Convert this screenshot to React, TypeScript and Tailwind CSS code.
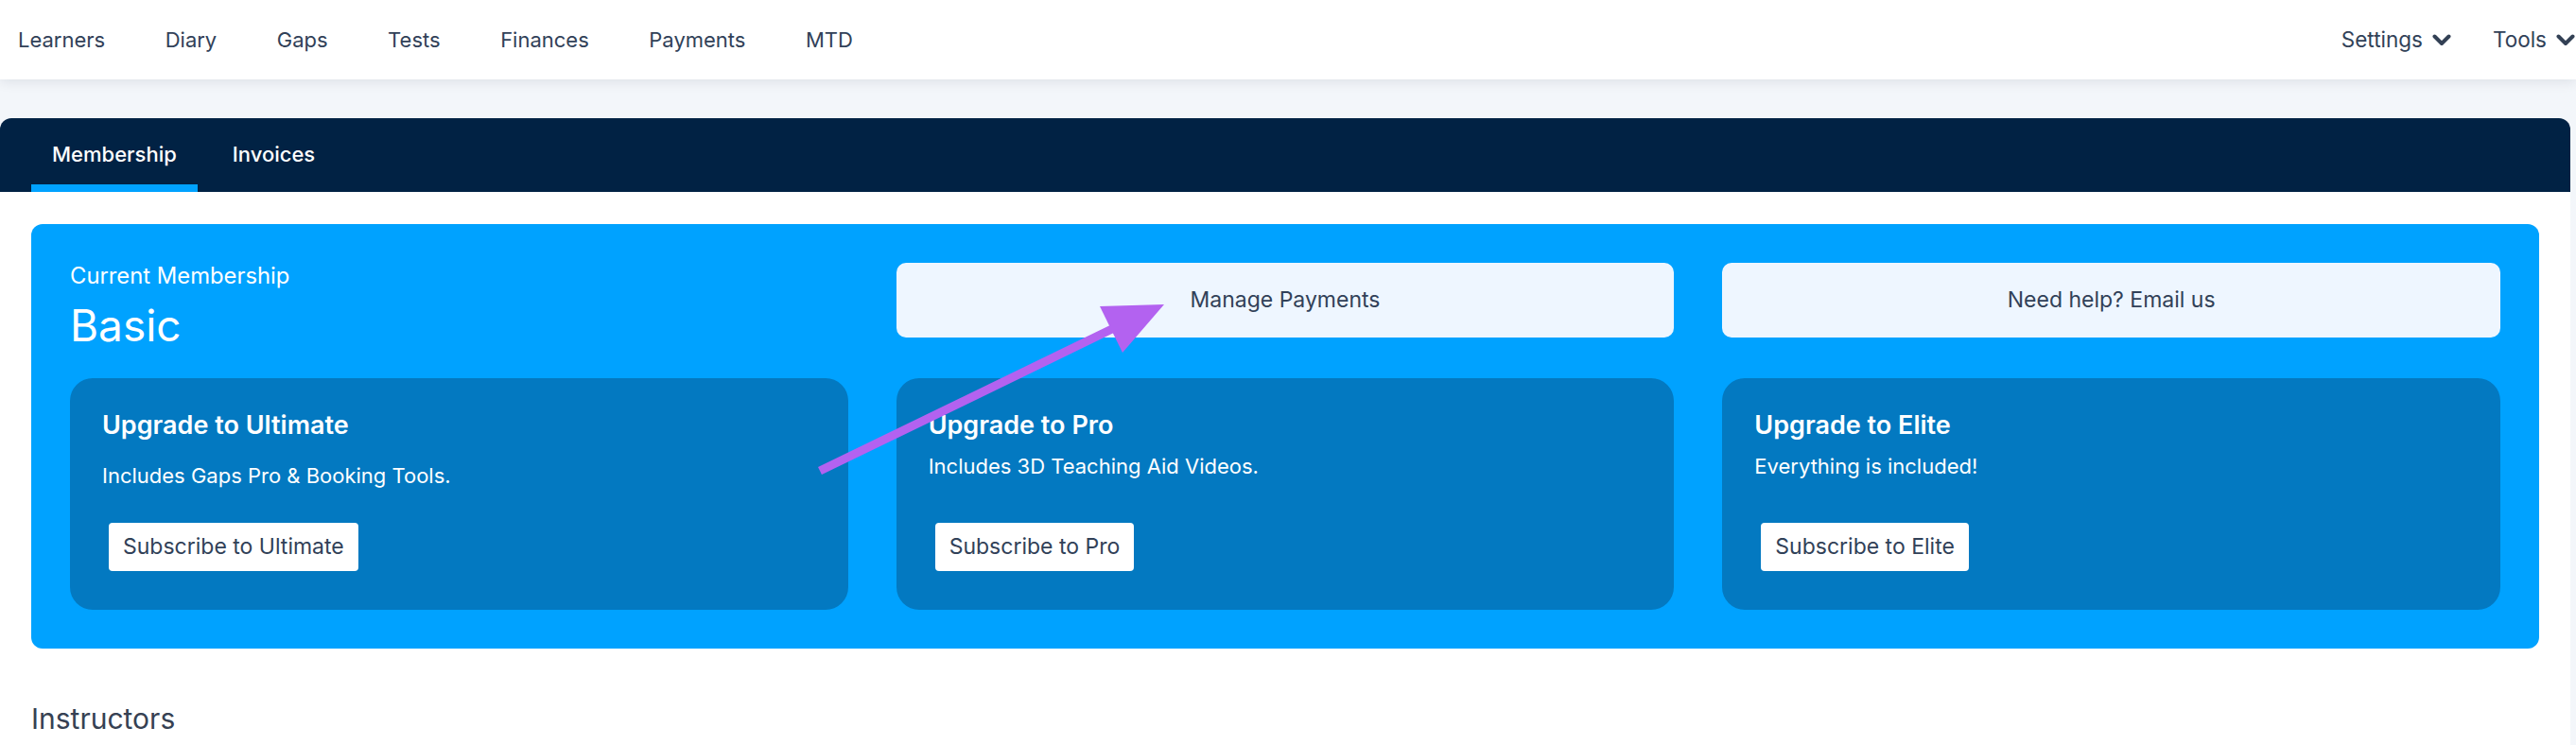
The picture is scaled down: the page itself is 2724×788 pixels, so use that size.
import React from 'react';

const navItems = ['Learners', 'Diary', 'Gaps', 'Tests', 'Finances', 'Payments', 'MTD'];

const plans = [
  { name: 'Ultimate', blurb: 'Includes Gaps Pro & Booking Tools.', gap: 'mt-[23px]' },
  { name: 'Pro', blurb: 'Includes 3D Teaching Aid Videos.', gap: 'mt-[13px]' },
  { name: 'Elite', blurb: 'Everything is included!', gap: 'mt-[13px]' },
];

function Chevron() {
  return (
    <svg width="20" height="13" viewBox="0 0 20 13" className="ml-[10px]">
      <path d="M2.5 2.5 L10 10 L17.5 2.5" fill="none" stroke="#334155" strokeWidth="4" strokeLinecap="round" strokeLinejoin="round" />
    </svg>
  );
}

export default function App() {
  return (
    <div
      className="relative min-h-screen bg-[#f3f6fa] text-slate-700 overflow-hidden"
      style={{ fontFamily: 'Inter, "Noto Sans", sans-serif' }}
    >
      {/* Top nav */}
      <header className="relative z-10 h-[84px] bg-white shadow-[0_3px_12px_rgba(15,23,42,0.09)] flex items-center justify-between pl-[19px] pr-[1px]">
        <nav className="flex items-center gap-[63.5px] text-[22px] leading-[28px]">
          {navItems.map((item) => (
            <span key={item}>{item}</span>
          ))}
        </nav>
        <div className="flex items-center gap-[44px] text-[22.5px] leading-[28px]">
          <span className="flex items-center">Settings<Chevron /></span>
          <span className="flex items-center">Tools<Chevron /></span>
        </div>
      </header>

      {/* Main panel */}
      <main className="pt-[41px] pr-[6px]">
        <div className="bg-white rounded-t-[12px] overflow-hidden min-h-[663px]">
          {/* Tabs */}
          <div className="h-[78px] bg-[#012244] flex px-[33px] gap-[15px] text-white text-[22px] leading-[26px]">
            <div className="h-full px-[22px] pt-[25px] border-b-[8px] border-[#00a2ff] font-medium">Membership</div>
            <div className="h-full px-[22px] pt-[25px] border-b-[8px] border-transparent font-medium">Invoices</div>
          </div>

          <div className="px-[33px] pt-[34px]">
            {/* Membership card */}
            <section className="bg-[#00a2ff] rounded-[12px] p-[41px] grid grid-cols-3 gap-x-[51px] gap-y-[33px]">
              <div className="text-white">
                <p className="text-[23.8px] leading-[28px]">Current Membership</p>
                <h1 className="mt-[15px] text-[46px] leading-[46px]">Basic</h1>
              </div>
              <button className="self-start h-[79px] rounded-[10px] bg-[#eef6ff] text-[23px] text-slate-700">
                Manage Payments
              </button>
              <button className="self-start h-[79px] rounded-[10px] bg-[#eef6ff] text-[23px] text-slate-700">
                Need help? Email us
              </button>

              {plans.map((p) => (
                <div key={p.name} className="h-[245px] rounded-[24px] bg-[#0379c1] p-[34px] pb-[41px] flex flex-col text-white">
                  <h3 className="text-[27px] leading-[32px] font-semibold">Upgrade to {p.name}</h3>
                  <p className={`${p.gap} text-[22px] leading-[28px]`}>{p.blurb}</p>
                  <button className="mt-auto ml-[7px] self-start h-[51px] px-[15px] rounded-[4px] bg-white text-[23px] text-slate-700">
                    Subscribe to {p.name}
                  </button>
                </div>
              ))}
            </section>

            <h2 className="mt-[56px] text-[30px] leading-[36px] text-gray-700">Instructors</h2>
          </div>
        </div>
      </main>

      {/* Annotation arrow */}
      <svg className="absolute left-0 top-0 pointer-events-none" width="2724" height="788" viewBox="0 0 2724 788">
        <line x1="867" y1="498" x2="1182" y2="345" stroke="#b362f0" strokeWidth="9" />
        <polygon points="1163,324 1231,322 1187,373" fill="#b362f0" />
      </svg>
    </div>
  );
}
